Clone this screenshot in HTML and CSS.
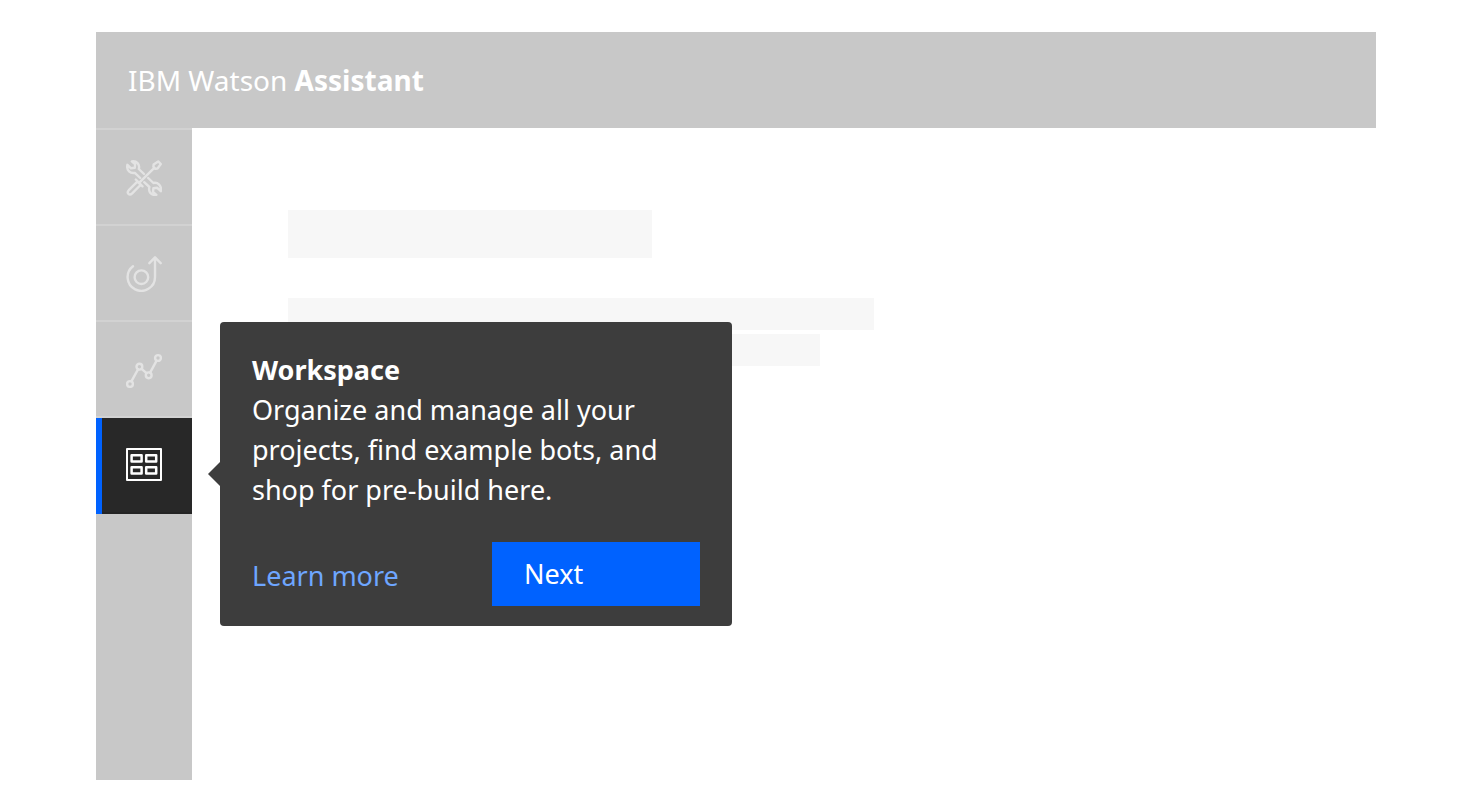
FILE: index.html
```html
<!DOCTYPE html>
<html lang="en">
<head>
<meta charset="utf-8">
<meta name="viewport" content="width=device-width, initial-scale=1">
<title>IBM Watson Assistant</title>
<link rel="stylesheet" href="styles.css">
</head>
<body>
<div class="shell">
  <header class="header">IBM Watson <strong>Assistant</strong></header>
  <div class="body">
    <nav class="nav" aria-label="Main">
      <ul class="nav-list">
        <li class="nav-item">
          <a class="nav-link" href="#" aria-label="Build">
            <svg class="icon" viewBox="0 0 36 36" aria-hidden="true">
              <path d="M27.6 4.6 32.2 1.4 34.8 4 31.5 8.6 29.4 8.8 27.4 6.7ZM28.3 7.9 12.8 23.2M9.8 19.5 16.5 26.3M11.3 21.6 2.8 30.2C.2 33 3.4 36.2 6.2 33.4L14.5 25"/>
              <path d="M14.2 18 8.8 12.9C4.6 13.8.2 10.5 1.4 4.8L5 8.3 8.8 7.8 9.2 4.2 5.8 1.4C10.5.4 14.2 4.3 12.8 9L18 14"/>
              <path d="M22.2 18 27.4 23C31.6 22 36 25.6 34.8 31.2L31.2 27.8 27.4 28.2 27 31.8 30.4 34.8C25.6 35.8 22 31.8 23.4 27L18.2 22.2"/>
            </svg>
          </a>
        </li>
        <li class="nav-item">
          <a class="nav-link" href="#" aria-label="Deploy">
            <svg class="icon" viewBox="0 0 36 36" aria-hidden="true">
              <circle cx="15.4" cy="21.2" r="6.8"/>
              <path d="M7 10.2A13.7 13.7 0 1 0 29 21.2V1.5M23.4 7.2 29 1.4 34.7 7.2"/>
            </svg>
          </a>
        </li>
        <li class="nav-item">
          <a class="nav-link" href="#" aria-label="Improve">
            <svg class="icon" viewBox="0 0 36 36" aria-hidden="true">
              <circle cx="4" cy="32" r="2.9"/>
              <circle cx="13.4" cy="14.7" r="2.9"/>
              <circle cx="22.7" cy="23.3" r="2.9"/>
              <circle cx="32" cy="6" r="2.9"/>
              <path d="M5.4 29.3 12 17.3M15.6 16.8 20.5 21.2M24.1 20.6 30.6 8.7"/>
            </svg>
          </a>
        </li>
        <li class="nav-item nav-item-active">
          <a class="nav-link" href="#" aria-label="Workspace" aria-current="page">
            <svg class="icon" viewBox="0 0 36 36" aria-hidden="true">
              <path d="M1 1H35V32H1Z"/>
              <path class="icon-cells" d="M5.6 7.2H15.6V13.4H5.6ZM20.2 7.2H30.2V13.4H20.2ZM5.6 19.2H15.6V25.4H5.6ZM20.2 19.2H30.2V25.4H20.2Z"/>
            </svg>
          </a>
          <section class="popover" aria-labelledby="popover-title">
            <h2 class="popover-title" id="popover-title">Workspace</h2>
            <p class="popover-text">Organize and manage all your projects, find example bots, and shop for pre-build here.</p>
            <div class="popover-actions">
              <a class="popover-link" href="#">Learn more</a>
              <button class="popover-button" type="button">Next</button>
            </div>
          </section>
        </li>
      </ul>
    </nav>
    <main class="content">
      <div class="block block-title"></div>
      <div class="block block-line"></div>
      <div class="block block-line block-short"></div>
    </main>
  </div>
</div>
</body>
</html>
```
FILE: styles.css
```css
* {
  box-sizing: border-box;
}

body {
  margin: 0;
  background: #fff;
  font-family: "Noto Sans", sans-serif;
  font-size: 27px;
  line-height: 40px;
}

.shell {
  display: flex;
  flex-direction: column;
  min-height: 100vh;
  padding: 32px 96px;
}

.header {
  padding: 28px 32px;
  background: #c8c8c8;
  color: #fff;
  font-size: 28px;
}

.body {
  display: flex;
  flex: 1;
}

.nav {
  flex: 0 0 96px;
  background: #c8c8c8;
}

.nav-list {
  margin: 0;
  padding: 0;
  list-style: none;
}

.nav-item {
  position: relative;
  border-top: 2px solid #d2d2d2;
}

.nav-link {
  display: flex;
  align-items: center;
  justify-content: center;
  height: 94px;
  padding-top: 2px;
  color: #e3e3e3;
}

.nav-item-active .nav-link {
  height: 96px;
  padding-top: 0;
  background: #282828;
  box-shadow: inset 6px 0 #0062ff, inset 0 -2px #242424;
  color: #fff;
}

.icon {
  width: 36px;
  height: 36px;
  fill: none;
  stroke: currentColor;
  stroke-width: 2.4;
  stroke-linecap: round;
  stroke-linejoin: round;
}

.nav-item-active .icon {
  stroke-width: 2;
}

.icon-cells {
  stroke-width: 2.5;
}

.popover {
  position: absolute;
  top: -96px;
  left: 124px;
  z-index: 1;
  width: 512px;
  padding: 28px 32px 20px;
  border-radius: 4px;
  background: #3d3d3d;
  color: #fff;
}

.popover::before {
  content: "";
  position: absolute;
  top: 50%;
  right: 100%;
  margin-top: -12px;
  border: 12px solid transparent;
  border-right-color: #3d3d3d;
  border-left: 0;
}

.popover-title {
  margin: 0;
  font-size: 27px;
  font-weight: 700;
}

.popover-text {
  margin: 0;
}

.popover-actions {
  display: flex;
  align-items: center;
  justify-content: space-between;
  margin-top: 32px;
}

.popover-link {
  padding-top: 4px;
  color: #6ea6ff;
  text-decoration: none;
}

.popover-button {
  width: 208px;
  height: 64px;
  padding: 0 32px;
  border: 0;
  background: #0062ff;
  color: #fff;
  font: inherit;
  text-align: left;
}

.content {
  flex: 1;
  padding: 82px 96px;
}

.block {
  max-width: 100%;
  background: #f7f7f7;
}

.block-title {
  width: 364px;
  height: 48px;
  margin-bottom: 40px;
}

.block-line {
  width: 586px;
  height: 32px;
  margin-bottom: 4px;
}

.block-short {
  width: 532px;
}
```
